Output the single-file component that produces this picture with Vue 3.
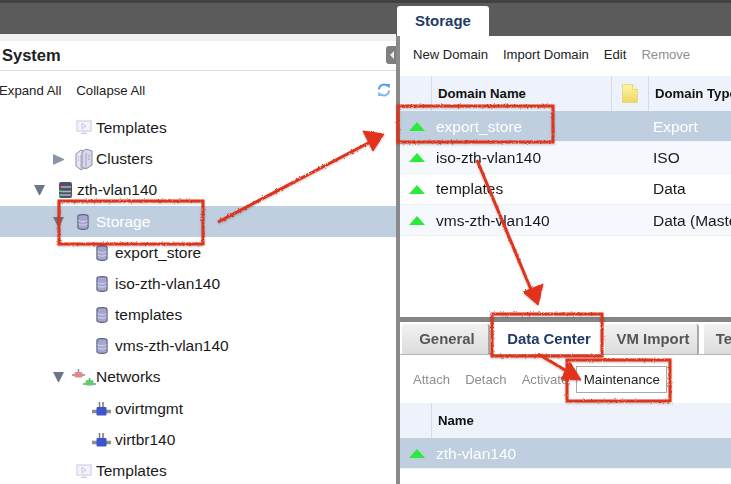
<script setup>
const tree = [
  { label: 'Templates', level: 1, icon: 'monitor' },
  { label: 'Clusters', level: 1, icon: 'cluster', arrow: 'closed' },
  { label: 'zth-vlan140', level: 0, icon: 'rack', arrow: 'open' },
  { label: 'Storage', level: 1, icon: 'disk', arrow: 'open', selected: true },
  { label: 'export_store', level: 2, icon: 'disk' },
  { label: 'iso-zth-vlan140', level: 2, icon: 'disk' },
  { label: 'templates', level: 2, icon: 'disk' },
  { label: 'vms-zth-vlan140', level: 2, icon: 'disk' },
  { label: 'Networks', level: 1, icon: 'networks', arrow: 'open' },
  { label: 'ovirtmgmt', level: 2, icon: 'net' },
  { label: 'virtbr140', level: 2, icon: 'net' },
  { label: 'Templates', level: 1, icon: 'monitor' }
]

const domains = [
  { name: 'export_store', type: 'Export', selected: true },
  { name: 'iso-zth-vlan140', type: 'ISO', alt: true },
  { name: 'templates', type: 'Data' },
  { name: 'vms-zth-vlan140', type: 'Data (Master)', alt: true }
]

const subTabs = [
  { label: 'General', width: 88 },
  { label: 'Data Center', width: 102, active: true },
  { label: 'VM Import', width: 94 },
  { label: 'Templates', width: 94 }
]

const boxes = [
  { x: 59, y: 201, w: 144, h: 43 },
  { x: 398, y: 106, w: 155, h: 36 },
  { x: 492, y: 314, w: 110, h: 42 },
  { x: 567, y: 360, w: 103, h: 41 }
]
</script>

<template>
  <div class="screen">
    <div class="page">
      <aside class="left">
        <div class="strip"></div>
        <div class="title">
          <span>System</span>
          <span class="toggle"><i></i></span>
        </div>
        <div class="tree-tools">
          <span class="expand">Expand All</span>
          <span>Collapse All</span>
          <svg class="refresh" width="14" height="14" viewBox="0 0 14 14">
            <path d="M2 6.500A5 5 0 0 1 10.500 3" fill="none" stroke="#4d9fe6" stroke-width="2" />
            <path d="M8.500 1l4.500 0-.5 4.500z" fill="#4d9fe6" />
            <path d="M12 7.500A5 5 0 0 1 3.500 11" fill="none" stroke="#7db8ea" stroke-width="2" />
            <path d="M5.500 13l-4.500 0 .5-4.500z" fill="#7db8ea" />
          </svg>
        </div>
        <div class="tree">
          <div
            v-for="(node, i) in tree"
            :key="i"
            class="node"
            :class="[`level${node.level}`, { selected: node.selected }]"
          >
            <span class="arrow" :class="node.arrow"></span>
            <span class="icon">
              <svg v-if="node.icon === 'monitor'" width="16" height="15" viewBox="0 0 16 15">
                <rect x="1" y="1" width="14" height="10" fill="#f4f3fb" stroke="#c9c8e4" />
                <path d="M6 3.500l4 2.500-4 2.500z" fill="none" stroke="#c9c8e4" />
                <path d="M8 11v2M5 13.500h6" stroke="#c9c8e4" />
              </svg>
              <svg v-else-if="node.icon === 'cluster'" class="cube" width="18" height="23" viewBox="0 0 18 23">
                <path d="M1 6l5-4 5 2v15l-5 3-5-4z" fill="#e6e6f5" stroke="#8e8ea6" />
                <path d="M7 4l4-3 6 2v14l-6 4-4-2z" fill="#d8d8ec" stroke="#8e8ea6" />
                <path d="M6 7v14M11 5v15" stroke="#a5a5bd" />
                <path d="M3 9h1M3 12h1M13 8h2M13 11h2" stroke="#9a9ab5" />
              </svg>
              <svg v-else-if="node.icon === 'rack'" width="15" height="18" viewBox="0 0 15 18">
                <rect x="1" y="1" width="13" height="16" rx="2" fill="#4e5266" />
                <path d="M3 6h10M3 10.500h10M3 14h10" stroke="#aeb2c8" stroke-width="1.500" />
                <rect x="1" y="5" width="2" height="2" fill="#e0263a" />
                <rect x="1" y="9" width="2" height="2" fill="#2fd04a" />
                <rect x="1" y="13" width="2" height="2" fill="#2fd04a" />
              </svg>
              <svg v-else-if="node.icon === 'disk'" class="disk" width="12" height="18" viewBox="0 0 13 18">
                <path d="M1 3C1 .3 12 .3 12 3v12C12 17.700 1 17.700 1 15z" fill="#a5a6cf" stroke="#5b5e78" stroke-width="1.200" />
                <path d="M1.500 7.500c2 1.800 8 1.800 10 0M1.500 11c2 1.800 8 1.800 10 0" fill="none" stroke="#d9d9ee" />
              </svg>
              <svg v-else-if="node.icon === 'networks'" class="wide" width="24" height="18" viewBox="0 0 24 18">
                <path d="M0 7h13M6.500 1v4" stroke="#8b8b8b" stroke-width="1.500" />
                <rect x="2.500" y="4" width="8" height="5.500" rx="1.500" fill="#e08a90" />
                <path d="M11 16h13M17.500 10v3" stroke="#8b8b8b" stroke-width="1.500" />
                <rect x="13.500" y="12" width="8" height="5.500" rx="1.500" fill="#5fcf75" />
              </svg>
              <svg v-else width="19" height="16" viewBox="0 0 19 16">
                <path d="M0 10.500h19" stroke="#8d8d8d" stroke-width="3.500" />
                <path d="M7.500 1v6M11 1v6" stroke="#777" stroke-width="1.500" />
                <rect x="4.500" y="6" width="10" height="8.500" rx="1" fill="#3d55c8" />
              </svg>
            </span>
            <span class="label">{{ node.label }}</span>
          </div>
        </div>
      </aside>

      <div class="splitter"></div>

      <main class="content">
        <div class="top-tabs">
          <span class="top-tab">Storage</span>
        </div>
        <section class="upper">
          <div class="actions">
            <span>New Domain</span>
            <span>Import Domain</span>
            <span>Edit</span>
            <span class="off">Remove</span>
          </div>
          <div class="thead">
            <span class="c-status"></span>
            <span class="c-name">Domain Name</span>
            <span class="c-note">
              <svg width="16" height="19" viewBox="0 0 16 19">
                <defs>
                  <linearGradient id="note" x1="0" y1="0" x2="0" y2="1">
                    <stop offset="0" stop-color="#fdf7a8" />
                    <stop offset="1" stop-color="#eed95c" />
                  </linearGradient>
                </defs>
                <path d="M.5.500h10l5 5v13H.5z" fill="url(#note)" stroke="#e3d98c" />
                <path d="M10.500.500v5h5" fill="#fbf3c0" stroke="#e3d98c" />
              </svg>
            </span>
            <span class="c-type">Domain Type</span>
          </div>
          <div
            v-for="d in domains"
            :key="d.name"
            class="trow"
            :class="{ selected: d.selected, alt: d.alt }"
          >
            <span class="c-status"><i class="up"></i></span>
            <span class="c-name">{{ d.name }}</span>
            <span class="c-note"></span>
            <span class="c-type">{{ d.type }}</span>
          </div>
        </section>

        <section class="lower">
          <div class="sub-tabs">
            <span
              v-for="t in subTabs"
              :key="t.label"
              class="sub-tab"
              :class="{ active: t.active }"
              :style="{ width: t.width + 'px' }"
            >{{ t.label }}</span>
          </div>
          <div class="actions sub-actions">
            <span class="off">Attach</span>
            <span class="off">Detach</span>
            <span class="off">Activate</span>
            <span class="btn">Maintenance</span>
          </div>
          <div class="thead short">
            <span class="c-status"></span>
            <span class="c-name">Name</span>
          </div>
          <div class="trow selected">
            <span class="c-status"><i class="up"></i></span>
            <span class="c-name">zth-vlan140</span>
          </div>
        </section>
      </main>
    </div>

    <svg class="marks" width="731" height="484" viewBox="0 0 731 484">
      <defs>
        <filter id="rough" x="-5%" y="-5%" width="110%" height="110%">
          <feTurbulence type="fractalNoise" baseFrequency="0.55" numOctaves="2" seed="4" result="n" />
          <feDisplacementMap in="SourceGraphic" in2="n" scale="2.600" />
        </filter>
      </defs>
      <g filter="url(#rough)" fill="none" stroke="#e2301c" stroke-width="3">
        <rect v-for="(b, i) in boxes" :key="i" :x="b.x" :y="b.y" :width="b.w" :height="b.h" />
        <path d="M218 222L372 141" />
        <path d="M477 160L532 292" />
        <path d="M538 354L572 374" />
        <path d="M384 134L363 131 373 151z" fill="#e2301c" stroke-width="1" />
        <path d="M538 305L523 292 543 284z" fill="#e2301c" stroke-width="1" />
        <path d="M581 380L561 379 570 362z" fill="#e2301c" stroke-width="1" />
      </g>
    </svg>
  </div>
</template>

<style scoped>
.screen {
  position: relative;
  width: 731px;
  height: 484px;
  overflow: hidden;
  background: #fff;
  font-family: "Liberation Sans", Arial, sans-serif;
  color: #1a1a1a;
}

.page {
  display: flex;
  height: 100%;
  box-sizing: border-box;
  border-top: 3px solid #3f4345;
  background: #5b5b5b;
  filter: blur(0.35px);
}

.left {
  width: 396px;
  margin-top: 31px;
  background: #fff;
  overflow: hidden;
}

.strip {
  height: 7px;
  background: #f0f0f0;
}

.title {
  display: flex;
  justify-content: space-between;
  height: 29px;
  padding-left: 2px;
  border-bottom: 1px solid #dcdcdc;
  font-size: 16.5px;
  font-weight: bold;
  line-height: 28px;
  color: #222;
}

.toggle {
  display: flex;
  align-items: center;
  justify-content: flex-end;
  width: 10px;
  height: 18px;
  margin-top: 5px;
  border-radius: 3px 0 0 3px;
  background: #7f7f7f;
}

.toggle i {
  width: 0;
  height: 0;
  margin-right: 2px;
  border-top: 4px solid transparent;
  border-bottom: 4px solid transparent;
  border-right: 4px solid #eee;
}

.tree-tools {
  display: flex;
  align-items: center;
  gap: 15px;
  height: 41px;
  padding: 0 5px 3px 0;
  box-sizing: border-box;
  font-size: 13.2px;
  color: #222;
}

.expand {
  margin-left: -1px;
}

.refresh {
  margin-left: auto;
}

.tree {
  padding-top: 0.4px;
  font-size: 15.5px;
}

.node {
  display: flex;
  align-items: center;
  height: 31.2px;
  color: #1a1a1a;
}

.node.selected {
  background: #c0cfdf;
  color: #fff;
}

.level0 { padding-left: 34px; }
.level1 { padding-left: 53px; }
.level2 { padding-left: 72px; }

.arrow {
  flex: none;
  width: 19px;
}

.arrow.closed {
  box-sizing: border-box;
  width: 11px;
  height: 11px;
  margin-right: 8px;
  border-top: 5.5px solid transparent;
  border-bottom: 5.5px solid transparent;
  border-left: 11px solid #8b95a5;
}

.arrow.open {
  box-sizing: border-box;
  width: 11px;
  height: 10px;
  margin-right: 8px;
  border-left: 5.5px solid transparent;
  border-right: 5.5px solid transparent;
  border-top: 10px solid #6c7686;
}

.icon {
  display: flex;
  flex: none;
  align-items: center;
  justify-content: flex-end;
  width: 24px;
  padding-right: 4px;
  box-sizing: border-box;
}

.icon svg {
  flex: none;
}

.icon .disk {
  margin-right: 3px;
}

.icon .cube {
  margin-right: -1px;
}

.icon .wide {
  margin-right: -4px;
}

.content {
  display: flex;
  flex: 1;
  flex-direction: column;
  min-width: 0;
}

.splitter {
  width: 4px;
  margin-top: 33px;
  background: #8a8a8a;
}

.top-tabs {
  display: flex;
  height: 33px;
  box-sizing: border-box;
  padding-top: 3px;
  margin-left: -3px;
  position: relative;
}

.top-tab {
  width: 92px;
  height: 30px;
  border-radius: 3px 3px 0 0;
  background: #fff;
  font-size: 15px;
  font-weight: bold;
  line-height: 30px;
  text-align: center;
  color: #1f3a68;
}

.upper {
  height: 281px;
  background: #fff;
}

.actions {
  display: flex;
  align-items: center;
  gap: 15px;
  height: 40px;
  padding: 0 0 4px 13px;
  box-sizing: border-box;
  font-size: 13.1px;
  color: #222;
}

.off {
  color: #8e8e8e;
}

.thead {
  display: flex;
  height: 35px;
  background: #eef2fb;
  font-size: 13.2px;
  font-weight: bold;
  line-height: 35px;
  color: #111;
}

.thead > span {
  box-sizing: border-box;
  border-right: 1px solid #d5dbe8;
}

.trow {
  display: flex;
  align-items: center;
  height: 31.3px;
  padding-top: 1px;
  font-size: 15.5px;
  background: #fff;
  color: #1a1a1a;
  border-bottom: 1px solid #f0f2f6;
  box-sizing: border-box;
}

.trow.alt {
  background: #f5f8fc;
}

.trow.selected {
  background: #c0cfdf;
  color: #fff;
}

.c-status {
  display: flex;
  flex: none;
  align-items: center;
  justify-content: center;
  width: 32px;
  padding-left: 2px;
  box-sizing: border-box;
}

.c-name {
  flex: none;
  width: 180px;
  padding-left: 4px;
  box-sizing: border-box;
}

.thead .c-status {
  height: 35px;
}

.thead .c-name {
  padding-left: 6px;
}

.thead.short .c-name {
  flex: 1;
  border-right: 0;
}

.c-note {
  display: flex;
  flex: none;
  align-items: center;
  justify-content: center;
  width: 37px;
}

.c-type {
  flex: none;
  width: 90px;
  padding-left: 4px;
  box-sizing: border-box;
  white-space: nowrap;
}

.thead .c-type {
  padding-left: 6px;
  border-right: 0;
}

.up {
  width: 0;
  height: 0;
  border-left: 8px solid transparent;
  border-right: 8px solid transparent;
  border-bottom: 9px solid #2bea3c;
}

.lower {
  flex: 1;
  border-top: 5px solid #858585;
  background: #fff;
  overflow: hidden;
}

.sub-tabs {
  display: flex;
  gap: 5px;
  height: 33px;
  padding: 2px 0 0 2px;
  border-bottom: 1px solid #b5b5b5;
  box-sizing: border-box;
  background: #fff;
}

.sub-tab {
  flex: none;
  box-sizing: border-box;
  height: 30px;
  padding-left: 4px;
  border-radius: 3px 3px 0 0;
  background: linear-gradient(#f2f2f2, #dcdcdc);
  border-right: 2px solid #aaa;
  font-size: 14.9px;
  font-weight: bold;
  line-height: 30px;
  text-align: center;
  white-space: nowrap;
  color: #555;
}

.sub-tab.active {
  margin-left: 3px;
  padding-left: 0;
  background: #fff;
  border-right: 0;
  color: #1f3a68;
}

.sub-actions {
  height: 48px;
  padding-bottom: 0;
}

.btn {
  margin-left: -7px;
  padding: 0 6.5px;
  height: 25px;
  line-height: 25px;
  border: 1px solid #aaa;
  font-size: 13.3px;
  color: #222;
}

.marks {
  position: absolute;
  top: 0;
  left: 0;
  filter: drop-shadow(0 1px 1px rgba(0, 0, 0, 0.25));
}
</style>
